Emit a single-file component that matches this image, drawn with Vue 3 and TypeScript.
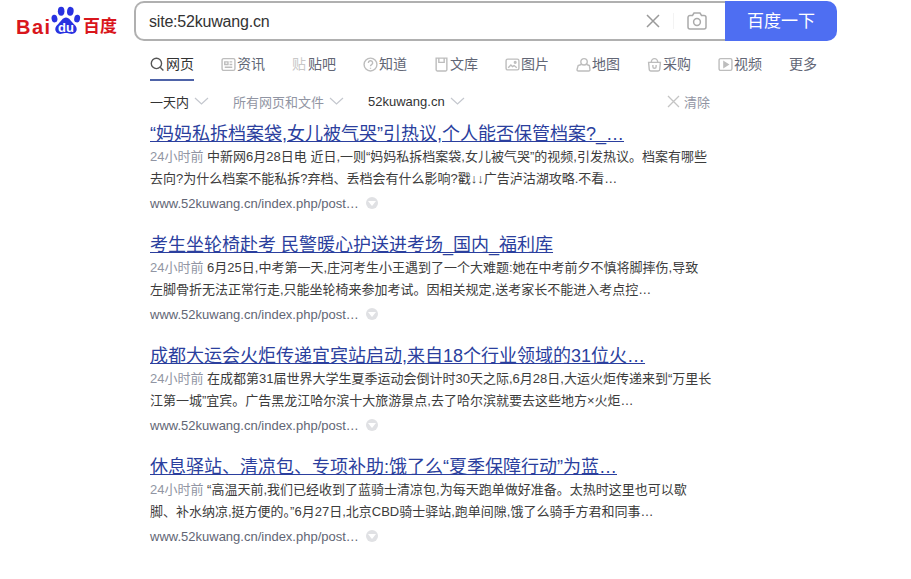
<template>
  <div class="page">
    <header class="head">
      <a class="logo" aria-label="百度">
        <span class="logo-bai">Bai</span>
        <span class="paw">
          <svg width="30" height="32" viewBox="0 0 31 33">
            <ellipse cx="3.6" cy="14" rx="3" ry="4" fill="#2932e1" transform="rotate(-12 3.6 14)" />
            <ellipse cx="10.5" cy="6.5" rx="3.4" ry="4.6" fill="#2932e1" />
            <ellipse cx="20" cy="6.5" rx="3.4" ry="4.6" fill="#2932e1" transform="rotate(8 20 6.5)" />
            <ellipse cx="27" cy="14" rx="3" ry="4" fill="#2932e1" transform="rotate(12 27 14)" />
            <path d="M15.5 13c-3.5 0-5 4-8 6.500-3 2.500-3.500 5-2.800 7 1 2.800 3.800 3.500 6 3.300 2-.2 3.300-.8 4.800-.8s2.800.6 4.800.8c2.200.2 5-.5 6-3.300.7-2 .2-4.500-2.800-7-3-2.500-4.500-6.500-8-6.500z" fill="#2932e1" />
          </svg>
          <span class="paw-du">du</span>
        </span>
        <span class="logo-cn">百度</span>
      </a>
      <div class="search">
        <div class="search-box">
          <span class="query">site:52kuwang.cn</span>
          <svg class="clear-ico" width="14" height="14" viewBox="0 0 14 14">
            <path d="M1 1l12 12M13 1L1 13" stroke="#9a9a9a" stroke-width="1.500" fill="none" />
          </svg>
          <span class="divider"></span>
          <svg class="cam" width="20" height="18" viewBox="0 0 20 18">
            <path d="M1 5.500a2 2 0 0 1 2-2h2.500l1.500-2.500h6l1.500 2.500H17a2 2 0 0 1 2 2V15a2 2 0 0 1-2 2H3a2 2 0 0 1-2-2z" stroke="#aaa" stroke-width="1.500" fill="none" />
            <circle cx="10" cy="10" r="3.400" stroke="#aaa" stroke-width="1.500" fill="none" />
          </svg>
        </div>
        <button class="go">百度一下</button>
      </div>
    </header>

    <nav class="tabs">
      <a v-for="t in tabs" :key="t.name" class="tab" :class="{ active: t.active }">
        <svg v-if="t.icon" class="tab-ico" width="15" height="15" viewBox="0 0 14 14" fill="none" :stroke="t.active ? '#555' : '#bdbdbd'" stroke-width="1.300" v-html="t.icon"></svg>
        <span v-else-if="t.glyph" class="tab-glyph">{{ t.glyph }}</span>
        <span>{{ t.name }}</span>
      </a>
    </nav>

    <div class="filters">
      <span class="filter dark">一天内<svg class="chev" width="15" height="8" viewBox="0 0 15 8"><path d="M1 1l6.500 6L14 1" /></svg></span>
      <span class="filter grey">所有网页和文件<svg class="chev" width="15" height="8" viewBox="0 0 15 8"><path d="M1 1l6.500 6L14 1" /></svg></span>
      <span class="filter dark site">52kuwang.cn<svg class="chev" width="15" height="8" viewBox="0 0 15 8"><path d="M1 1l6.500 6L14 1" /></svg></span>
      <span class="wipe">
        <svg width="13" height="13" viewBox="0 0 13 13">
          <path d="M1 1l11 11M12 1L1 12" stroke="#c4c4c4" stroke-width="1.300" fill="none" />
        </svg>
        清除
      </span>
    </div>

    <main class="results">
      <article v-for="r in results" :key="r.title" class="result">
        <a class="title">{{ r.title }}</a>
        <p class="line"><span class="when">24小时前</span> {{ r.first }}</p>
        <p class="line">{{ r.second }}</p>
        <div class="source">
          <span>www.52kuwang.cn/index.php/post…</span>
          <i class="drop"></i>
        </div>
      </article>
    </main>
  </div>
</template>

<script setup lang="ts">
interface Tab {
  name: string
  icon?: string
  glyph?: string
  active?: boolean
}

interface Result {
  title: string
  first: string
  second: string
}

const tabs: Tab[] = [
  { name: '网页', active: true, icon: '<circle cx="6" cy="6" r="4.800"/><path d="M9.500 9.500L12.500 12.500"/>' },
  { name: '资讯', icon: '<rect x="1" y="1.500" width="12" height="11" rx="1.500"/><path d="M3.500 4.500h3v2.500h-3zM8 4.500h2.500M8 7h2.500M3.500 9.500h7"/>' },
  { name: '贴吧', glyph: '贴' },
  { name: '知道', icon: '<circle cx="7" cy="7" r="6"/><path d="M5 5.500a2 2 0 1 1 3 1.700c-.7.400-1 .8-1 1.500M7 10v1"/>' },
  { name: '文库', icon: '<path d="M2 1h10v11a1 1 0 0 1-1 1H3a1 1 0 0 1-1-1z"/><path d="M4.500 1v4h5V1"/>' },
  { name: '图片', icon: '<rect x="1" y="2" width="12" height="10" rx="1.500"/><path d="M3 10l2.500-2.500 1.500 1.500 1.500-1 2.500 2"/><circle cx="9.500" cy="5" r=".8"/>' },
  { name: '地图', icon: '<circle cx="7.500" cy="4.500" r="3"/><path d="M5 7L2 8l-1 3.500a1.200 1.200 0 0 0 1.200 1.500h9.600a1.200 1.200 0 0 0 1.200-1.500L12.500 8 10 7"/>' },
  { name: '采购', icon: '<path d="M1.500 5h11l-.6 6.500a1.500 1.500 0 0 1-1.500 1.500H3.600a1.500 1.500 0 0 1-1.500-1.500z"/><path d="M4 5a3 3.500 0 0 1 6 0M5.500 7.500v1.500a1.500 1.500 0 0 0 3 0V7.500"/>' },
  { name: '视频', icon: '<rect x="1" y="1.500" width="12" height="11" rx="1.500"/><path d="M5.500 4.500l4 2.500-4 2.500z" fill="#bdbdbd"/>' },
  { name: '更多' }
]

const results: Result[] = [
  {
    title: '“妈妈私拆档案袋,女儿被气哭”引热议,个人能否保管档案?_…',
    first: '中新网6月28日电 近日,一则“妈妈私拆档案袋,女儿被气哭”的视频,引发热议。档案有哪些',
    second: '去向?为什么档案不能私拆?弃档、丢档会有什么影响?戳↓↓广告泸沽湖攻略.不看…'
  },
  {
    title: '考生坐轮椅赴考 民警暖心护送进考场_国内_福利库',
    first: '6月25日,中考第一天,庄河考生小王遇到了一个大难题:她在中考前夕不慎将脚摔伤,导致',
    second: '左脚骨折无法正常行走,只能坐轮椅来参加考试。因相关规定,送考家长不能进入考点控…'
  },
  {
    title: '成都大运会火炬传递宜宾站启动,来自18个行业领域的31位火…',
    first: '在成都第31届世界大学生夏季运动会倒计时30天之际,6月28日,大运火炬传递来到“万里长',
    second: '江第一城”宜宾。广告黑龙江哈尔滨十大旅游景点,去了哈尔滨就要去这些地方×火炬…'
  },
  {
    title: '休息驿站、清凉包、专项补助:饿了么“夏季保障行动”为蓝…',
    first: '“高温天前,我们已经收到了蓝骑士清凉包,为每天跑单做好准备。太热时这里也可以歇',
    second: '脚、补水纳凉,挺方便的。”6月27日,北京CBD骑士驿站,跑单间隙,饿了么骑手方君和同事…'
  }
]
</script>

<style>
html,
body {
  margin: 0;
  background: #fff;
}
</style>

<style scoped>
.page {
  width: 911px;
  height: 579px;
  overflow: hidden;
  font-family: 'Liberation Sans', 'Noto Sans CJK SC', sans-serif;
  color: #333;
  background: #fff;
}

.head {
  display: flex;
  align-items: flex-start;
  padding: 1px 0 0 16px;
}

.logo {
  display: flex;
  align-items: flex-end;
  width: 118px;
  height: 36px;
  color: #d9161c;
  flex: none;
}

.logo-bai {
  font-size: 20px;
  font-weight: 700;
  line-height: 20px;
  letter-spacing: 1.5px;
  width: 35px;
  flex: none;
}

.paw {
  position: relative;
  width: 30px;
  height: 32px;
  flex: none;
}

.paw svg {
  display: block;
}

.paw-du {
  position: absolute;
  left: 7px;
  top: 16px;
  font-size: 13px;
  font-weight: 700;
  color: #fff;
  line-height: 14px;
}

.logo-cn {
  font-size: 17px;
  font-weight: 700;
  line-height: 20px;
  margin-left: 2px;
  white-space: nowrap;
}

.search {
  display: flex;
  height: 40px;
}

.search-box {
  display: flex;
  align-items: center;
  box-sizing: border-box;
  width: 591px;
  height: 40px;
  border: 2px solid #b0b0b0;
  border-right: 0;
  border-radius: 10px 0 0 10px;
  padding: 0 18px 0 13px;
}

.query {
  flex: 1;
  font-size: 16px;
  letter-spacing: -0.2px;
  margin-top: 1px;
  color: #333;
}

.clear-ico {
  flex: none;
}

.divider {
  width: 1px;
  height: 16px;
  margin: 0 13px;
  background: #f3f3f3;
}

.cam {
  flex: none;
}

.go {
  width: 112px;
  height: 40px;
  border: 0;
  border-radius: 0 10px 10px 0;
  background: #4e6ef2;
  color: #fff;
  font: 17px 'Liberation Sans', 'Noto Sans CJK SC', sans-serif;
  padding: 0 0 3px;
}

.tabs {
  display: flex;
  gap: 27px;
  margin: 14px 0 0 150px;
  height: 36px;
  font-size: 14px;
  color: #626675;
}

.tab {
  position: relative;
  display: flex;
  align-items: flex-start;
  height: 26px;
  line-height: 19px;
}

.tab.active {
  color: #333;
}

.tab.active::after {
  content: '';
  position: absolute;
  left: 0;
  right: 0;
  bottom: 0;
  height: 2px;
  background: #4e63a8;
}

.tab-ico {
  flex: none;
  margin: 2px 1px 0 0;
}

.tab-glyph {
  width: 16px;
  font-size: 14px;
  color: #c8c8c8;
}

.filters {
  position: relative;
  display: flex;
  align-items: center;
  height: 20px;
  margin: 0 0 0 150px;
  width: 560px;
  font-size: 13px;
}

.filter {
  display: flex;
  align-items: center;
}

.dark {
  color: #333;
}

.grey {
  color: #9195a3;
  margin-left: 24px;
}

.site {
  margin-left: 24px;
}

.chev {
  flex: none;
  margin-left: 5px;
  fill: none;
  stroke: #c4c7ce;
  stroke-width: 1.2;
}

.wipe {
  margin-left: auto;
  display: flex;
  align-items: center;
  gap: 4px;
  color: #9195a3;
}

.results {
  padding: 12px 0 0 150px;
}

.result {
  height: 111px;
}

.title {
  display: block;
  font-size: 18px;
  line-height: 23px;
  color: #2b3f9e;
  text-decoration: underline;
  white-space: nowrap;
}

.line {
  margin: 0;
  font-size: 13px;
  line-height: 22px;
  color: #3c3c3c;
  white-space: nowrap;
}

.when {
  color: #9195a3;
}

.source {
  display: flex;
  align-items: center;
  margin-top: 2px;
  height: 22px;
  font-size: 13px;
  color: #626675;
}

.drop {
  position: relative;
  width: 12px;
  height: 12px;
  margin-left: 7px;
  border-radius: 50%;
  background: #e0e1e4;
}

.drop::after {
  content: '';
  position: absolute;
  left: 2px;
  top: 4px;
  border: 4px solid transparent;
  border-top: 5px solid #fff;
}
</style>
